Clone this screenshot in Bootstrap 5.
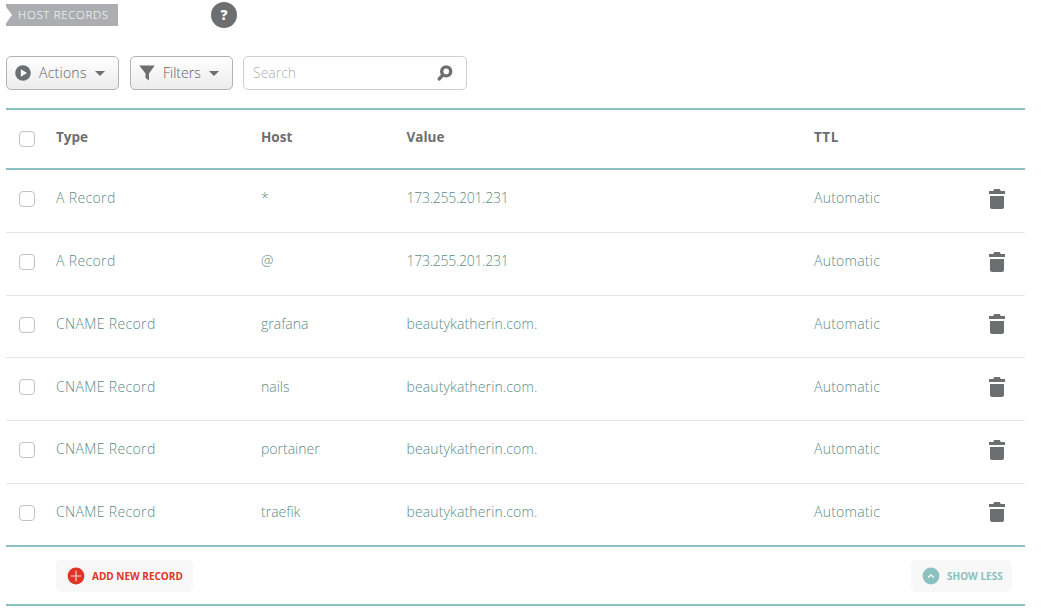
<!DOCTYPE html>
<html lang="en">
<head>
<meta charset="utf-8">
<meta name="viewport" content="width=device-width, initial-scale=1">
<title>Host Records</title>
<link href="https://cdn.jsdelivr.net/npm/bootstrap@5.3.0/dist/css/bootstrap.min.css" rel="stylesheet">
<style>
:root { --teal: #8bc1c0; --ink: #6d6e70; --link: #5b8c8a; }
body { font-family: "Open Sans", "Noto Sans", sans-serif; font-size: 14px; font-weight: 300; line-height: 20px; color: var(--ink); background: #fff; overflow: hidden; }
svg { display: block; flex: none; }
.page { width: 1019px; margin-left: 6px; padding-top: 2px; }
.title-row { height: 26px; }
.section-tag { width: 112px; height: 22px; padding-left: 12px; background: #abadb0; color: #fff; font-size: 11.5px; font-weight: 350; letter-spacing: .67px; line-height: 22px; clip-path: polygon(0 0, 100% 0, 100% 100%, 0 100%, 0 88%, 6px 50%, 0 12%); white-space: nowrap; }
.help { width: 26px; height: 26px; margin-left: 93px; background: var(--ink); color: #fff; font-size: 14px; font-weight: 800; }
.toolbar { margin-top: 28px; height: 34px; }
.tool { height: 34px; border: 1px solid #b3b3b3; border-radius: 5px; background: linear-gradient(#fff, #ececec); color: #5f6062; font-size: 14px; font-weight: 300; letter-spacing: .25px; line-height: 20px; padding: 0 13px 0 8px; }
.tool-actions { width: 113px; }
.tool-filters { width: 103px; margin-left: 11px; }
.tool span { margin-left: 8px; padding-bottom: 1px; }
.tool-filters span { letter-spacing: 0; }
.search { width: 224px; height: 34px; margin-left: 10px; border: 1px solid #d0d0d0; border-radius: 5px; padding: 0 13px 0 9px; }
.search input { width: 160px; height: 30px; padding: 0 0 2px; border: 0; outline: 0; background: none; font-size: 14px; font-weight: 300; }
.search input::placeholder { color: #b0b0b0; opacity: 1; }
.records { margin-top: 18px; border-top: 2px solid var(--teal); }
.record { height: 62.75px; padding: 0 20px 3.5px 13px; border-bottom: 1px solid #e6e6e6; color: var(--link); }
.record.head { height: 60px; padding-bottom: 0; border-bottom: 2px solid var(--teal); color: var(--ink); font-weight: 700; font-size: 13.5px; }
.record.last { height: 63.25px; padding-bottom: 2.5px; border-bottom: 2px solid var(--teal); }
.record .form-check-input { width: 16px; height: 16px; margin: 0; border: 1px solid #c3c3c3; border-radius: 4px; flex: none; }
.record span { padding-bottom: 1.5px; white-space: nowrap; }
.record svg { margin-bottom: .6px; }
.record.last svg { margin-bottom: 1.6px; }
.record.head span { padding-bottom: 4px; letter-spacing: 0; }
.c-type { width: 205px; margin-left: 21px; letter-spacing: .36px; }
.c-host { width: 145.5px; letter-spacing: 0; }
.c-value { width: 407.5px; letter-spacing: .13px; }
.c-value.ip { letter-spacing: -.27px; }
.c-ttl { letter-spacing: .25px; }
.record.head .c-ttl { letter-spacing: .5px; }
.foot { height: 59px; padding: 0 13px 0 50px; border-bottom: 2px solid var(--teal); }
.pill { height: 32px; margin-top: 1px; border: 0; border-radius: 5px; background: #f8f8f8; font-size: 10px; font-weight: 700; line-height: 16px; padding: 0 10px 0 11px; white-space: nowrap; }
.pill span { margin-left: 7px; padding-bottom: 1px; }
.pill-add { width: 137px; color: #e03526; }
.pill-less { width: 101px; color: var(--teal); }
</style>
</head>
<body>
<svg width="0" height="0" class="d-none">
  <symbol id="trash" viewBox="0 0 16 20"><path d="M0 2h4.2L5.2 0h5.6l1 2H16v3H0zM1 7h14v11a2 2 0 0 1-2 2H3a2 2 0 0 1-2-2z"/></symbol>
</svg>
<main class="page">
  <div class="title-row d-flex align-items-center">
    <div class="section-tag">HOST RECORDS</div>
    <div class="help rounded-circle d-flex align-items-center justify-content-center">?</div>
  </div>
  <div class="toolbar d-flex">
    <button class="tool tool-actions d-flex align-items-center">
      <svg width="16" height="16" viewBox="0 0 16 16"><circle cx="8" cy="8" r="7.8" fill="#6d6e70"/><path d="M5.8 4.2v7.6L12 8z" fill="#fff"/></svg>
      <span>Actions</span>
      <svg class="ms-auto" width="10" height="5" viewBox="0 0 10 5"><path d="M0 0h10L5 5z" fill="#6d6e70"/></svg>
    </button>
    <button class="tool tool-filters d-flex align-items-center">
      <svg width="16" height="16" viewBox="0 0 16 16"><path d="M.3.5h15.4L10 8.5v7L6.5 13V8.5z" fill="#6d6e70"/></svg>
      <span>Filters</span>
      <svg class="ms-auto" width="10" height="5" viewBox="0 0 10 5"><path d="M0 0h10L5 5z" fill="#6d6e70"/></svg>
    </button>
    <div class="search d-flex align-items-center justify-content-between">
      <input type="text" placeholder="Search" aria-label="Search">
      <svg width="16" height="16" viewBox="0 0 16 16" fill="none" stroke="#6d6e70"><circle cx="9.2" cy="6.4" r="4.5" stroke-width="3.4"/><path d="M5.7 10.2 2.3 13.9" stroke-width="3.4" stroke-linecap="round"/></svg>
    </div>
  </div>
  <div class="records">
    <div class="record head d-flex align-items-center"><input class="form-check-input" type="checkbox" aria-label="Select all"><span class="c-type">Type</span><span class="c-host">Host</span><span class="c-value">Value</span><span class="c-ttl">TTL</span></div>
    <div class="record d-flex align-items-center"><input class="form-check-input" type="checkbox" aria-label="Select"><span class="c-type">A Record</span><span class="c-host">*</span><span class="c-value ip">173.255.201.231</span><span class="c-ttl">Automatic</span><svg class="ms-auto" width="16" height="20" fill="#6d6e70"><use href="#trash"/></svg></div>
    <div class="record d-flex align-items-center"><input class="form-check-input" type="checkbox" aria-label="Select"><span class="c-type">A Record</span><span class="c-host">@</span><span class="c-value ip">173.255.201.231</span><span class="c-ttl">Automatic</span><svg class="ms-auto" width="16" height="20" fill="#6d6e70"><use href="#trash"/></svg></div>
    <div class="record d-flex align-items-center"><input class="form-check-input" type="checkbox" aria-label="Select"><span class="c-type">CNAME Record</span><span class="c-host">grafana</span><span class="c-value">beautykatherin.com.</span><span class="c-ttl">Automatic</span><svg class="ms-auto" width="16" height="20" fill="#6d6e70"><use href="#trash"/></svg></div>
    <div class="record d-flex align-items-center"><input class="form-check-input" type="checkbox" aria-label="Select"><span class="c-type">CNAME Record</span><span class="c-host">nails</span><span class="c-value">beautykatherin.com.</span><span class="c-ttl">Automatic</span><svg class="ms-auto" width="16" height="20" fill="#6d6e70"><use href="#trash"/></svg></div>
    <div class="record d-flex align-items-center"><input class="form-check-input" type="checkbox" aria-label="Select"><span class="c-type">CNAME Record</span><span class="c-host">portainer</span><span class="c-value">beautykatherin.com.</span><span class="c-ttl">Automatic</span><svg class="ms-auto" width="16" height="20" fill="#6d6e70"><use href="#trash"/></svg></div>
    <div class="record last d-flex align-items-center"><input class="form-check-input" type="checkbox" aria-label="Select"><span class="c-type">CNAME Record</span><span class="c-host">traefik</span><span class="c-value">beautykatherin.com.</span><span class="c-ttl">Automatic</span><svg class="ms-auto" width="16" height="20" fill="#6d6e70"><use href="#trash"/></svg></div>
    <div class="foot d-flex align-items-center justify-content-between">
      <button class="pill pill-add d-flex align-items-center">
        <svg width="18" height="18" viewBox="0 0 18 18"><circle cx="9" cy="9" r="8.4" fill="#e03526"/><path d="M9 3.8v10.4M3.8 9h10.4" stroke="#fbd5d0" stroke-width="1.2"/></svg>
        <span>ADD NEW RECORD</span>
      </button>
      <button class="pill pill-less d-flex align-items-center">
        <svg width="18" height="18" viewBox="0 0 18 18"><circle cx="9" cy="9" r="8.4" fill="#8bc1c0"/><path d="M6.2 10.4 9 7.8l2.8 2.6" fill="none" stroke="#fff" stroke-width="1.3"/></svg>
        <span>SHOW LESS</span>
      </button>
    </div>
  </div>
</main>
<script src="https://cdn.jsdelivr.net/npm/bootstrap@5.3.0/dist/js/bootstrap.bundle.min.js"></script>
</body>
</html>
